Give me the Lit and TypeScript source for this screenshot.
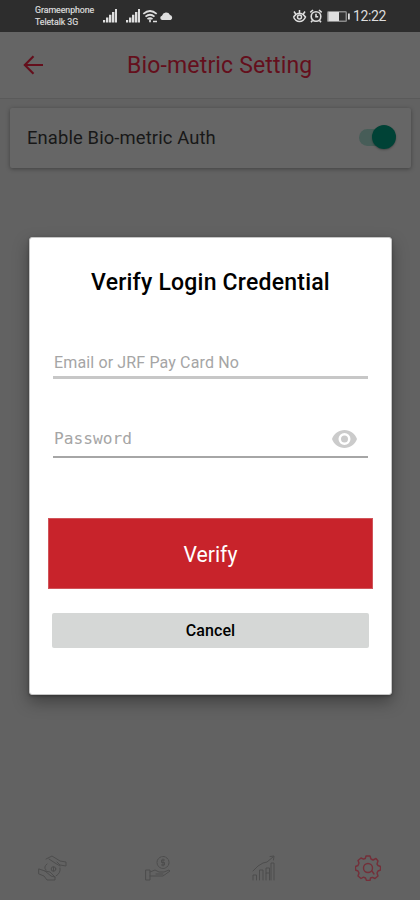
import { LitElement, html, css, svg } from "lit";
import { customElement } from "lit/decorators.js";

const signal = svg`<path d="M0 14.5h2.2v-2.500H0zM3 14.500h2.400V9.500H3zM6 14.500h2.400V6.800H6zM9 14.500h2.400V4H9zM12 14.500h2V1h-2z"/>`;

@customElement("app-root")
export class AppRoot extends LitElement {
  static styles = css`
    :host { display: block; }
    * { box-sizing: border-box; }
    .screen {
      position: relative; width: 420px; height: 900px; overflow: hidden;
      display: flex; flex-direction: column;
      background: #626262; font-family: Roboto, sans-serif; color: #181818;
    }
    svg { display: block; flex: none; }
    .status {
      height: 32px; background: #2d2d2d; color: #dcdcdc; fill: #dedede;
      display: flex; align-items: center; padding: 0 33px 0 35px;
    }
    .carrier { width: 68px; font-size: 8.8px; line-height: 12.5px; white-space: nowrap; letter-spacing: -0.05px; -webkit-text-stroke: 0.2px currentColor; }
    .spacer { flex: 1; }
    .clock { font-size: 14px; line-height: 32px; width: 34px; margin-left: 3px; letter-spacing: -0.35px; white-space: nowrap; }
    .bar {
      height: 67px; background: #656565; border-bottom: 1px solid #5a5a5a;
      display: flex; align-items: center; padding-left: 23px; color: #640f1c;
    }
    .title { flex: 1; padding-left: 83px; font-size: 23px; line-height: 30px; white-space: nowrap; padding-top: 1px; letter-spacing: 0.16px; }
    .card {
      margin: 9px 9px 0 10px; height: 60px; background: #666; border-radius: 2px;
      box-shadow: 0 1px 4px rgba(0, 0, 0, 0.35);
      display: flex; align-items: center; justify-content: space-between; padding: 0 15px 2px 17px;
      font-size: 18.4px; letter-spacing: 0.12px; white-space: nowrap;
    }
    .toggle { width: 37px; height: 24px; display: flex; align-items: center; }
    .track { width: 30px; height: 17px; border-radius: 9px; background: #475d58; }
    .thumb { width: 24px; height: 24px; border-radius: 50%; background: #004236; margin-left: -17px; flex: none; box-shadow: 0 1px 2px rgba(0, 0, 0, 0.3); }
    .nav { height: 64px; margin-top: auto; display: grid; grid-template-columns: repeat(4, 1fr); justify-items: center; align-items: center; color: #4d4d4d; }
    .nav svg { fill: none; stroke: currentColor; stroke-width: 1; stroke-linejoin: round; stroke-linecap: round; }
    .nav .pay { margin-left: 3px; }
    .nav .stats { margin-left: 2px; }
    .nav .active { color: #742f39; stroke-width: 1.4; }
    .dialog {
      position: absolute; left: 29px; top: 237px; width: 363px; height: 458px;
      background: #fff; border: 1px solid #c6c6c6; border-radius: 3px; color: #000;
      box-shadow: 0 7px 16px rgba(0, 0, 0, 0.34), 0 1px 3px rgba(0, 0, 0, 0.3);
      display: flex; flex-direction: column; padding: 29px 18px 0;
    }
    .heading { text-align: center; font-size: 23px; font-weight: 500; line-height: 32px; letter-spacing: 0.22px; white-space: nowrap; }
    .field { margin: 0 5px; display: flex; align-items: center; justify-content: space-between; color: #a5a5a5; font-size: 16px; white-space: nowrap; padding: 0 11px 0 1px; }
    .email { margin-top: 49px; height: 31px; border-bottom: 3px solid #c7c7c7; letter-spacing: 0.14px; padding-top: 1px; }
    .password { margin-top: 42px; height: 37px; border-bottom: 2px solid #a6a6a6; font-family: "DejaVu Sans Mono", monospace; font-size: 16.2px; }
    button { font-family: inherit; border: 0; padding: 0; display: block; }
    .verify { margin-top: 60px; height: 71px; background: #c8232b; color: #fff; font-size: 21.2px; border: 1px solid #d0545a; padding-top: 1px; }
    .cancel { margin: 24px 4px 0; height: 35px; background: #d5d7d6; color: #000; font-size: 16px; font-weight: 500; border-radius: 2px; letter-spacing: 0.1px; }
  `;

  render() {
    return html`
      <div class="screen">
        <div class="status">
          <div class="carrier"><div>Grameenphone</div><div>Teletalk 3G</div></div>
          <svg width="23" height="16" viewBox="0 0 23 16">${signal}</svg>
          <svg width="16" height="16" viewBox="0 0 16 16">${signal}</svg>
          <svg width="17" height="16" viewBox="0 0 17 16" fill="none" stroke="#dedede" stroke-width="1.7">
            <path d="M1.3 5.800Q8 .2 14.700 5.800M3.500 8.700Q8 4.800 12.500 8.700M5.500 11.200Q8 9 10.500 11.200"/>
            <path d="M8 11.200v3M11 13.500h4" />
          </svg>
          <svg width="15" height="16" viewBox="0 0 15 16"><path d="M3 12a2.200 2.200 0 0 1 0-4.300A4.300 4.300 0 0 1 11 6.900 2.700 2.700 0 0 1 11.600 12z"/></svg>
          <div class="spacer"></div>
          <svg width="17" height="16" viewBox="0 0 17 16" fill="none" stroke="#dedede" stroke-width="1.5">
            <path d="M1.500 9Q7.500 1.500 13.500 9 11.500 13.500 7.500 13.500T1.500 9M7.500 5V2M3.700 6 2 3.500M11.300 6 13 3.500"/><circle cx="7.500" cy="9" r="2" />
          </svg>
          <svg width="18" height="16" viewBox="0 0 18 16" fill="none" stroke="#dedede" stroke-width="1.6">
            <circle cx="7" cy="8.500" r="4.800"/><path d="M7 5.800v3h2.200M1.300 4.300 4 2M10 2l2.700 2.300M3.500 12.500 2 14.300M10.500 12.500l1.500 1.800"/>
          </svg>
          <svg width="23" height="16" viewBox="0 0 23 16">
            <rect x="0" y="3" width="20" height="11" rx="1.500" fill="#8a8a8a"/><rect x="12" y="4.500" width="6.500" height="8" fill="#333"/><path d="M1.500 4h10.500v9H1.500zM21 5.500h1.800v6H21z"/>
          </svg>
          <div class="clock">12:22</div>
        </div>
        <div class="bar">
          <svg width="21" height="20" viewBox="0 0 21 20" fill="none" stroke="currentColor" stroke-width="2.1"><path d="M20 10H2M10.500 1.300 1.800 10l8.700 8.700"/></svg>
          <div class="title">Bio-metric Setting</div>
        </div>
        <div class="card">
          <span>Enable Bio-metric Auth</span>
          <div class="toggle"><div class="track"></div><div class="thumb"></div></div>
        </div>
        <div class="nav">
          <svg width="30" height="26" viewBox="0 0 30 26">
            <path d="M8 4 14 1l8 5 6 1v4l-6-1-3-3M11 4l6 4 5 3M1 14l6 2 6 5 4 1v3H9l-3-4-5-2zM7 16l5 1 5 5M9 9Q5 12 8 15M22 13Q23 18 18 21"/>
            <circle cx="15.500" cy="14" r="2.300"/><path d="M15.500 12v4"/>
          </svg>
          <svg class="pay" width="28" height="26" viewBox="0 0 28 26">
            <path d="M1 15h4v10H1zM5 17l5-2 4 2h5l5-2 1 1-7 5H5M11 19h7"/>
            <circle cx="18" cy="7.500" r="6" stroke-dasharray="2.8 1"/><path d="M19.500 5h-3v2.500h3V10h-3M18 4v7"/>
          </svg>
          <svg class="stats" width="24" height="27" viewBox="0 0 24 27">
            <path d="M1 25v-5h3.500v5M7.500 25V15H11v10M14 25v-7h3.500v7M14 18v-5h3.500v5M19 25V8h3v17M1 16l5-5 5-3 4-1 6-5M18 1.500l4-.5-.5 4"/>
          </svg>
          <svg class="active" width="26" height="26" viewBox="0 0 26 26">
            <path d="M11 1h4l1 3 2 1 3-1.500L23 6l-1 3 1 1.500 2.500 1v3.500L23 16l-1 2 1 3-3 2.500-2.500-1.200L15.500 23 15 25.500h-3.500L10.500 23l-2-.8L6 23.500 3 21l1-3-1-2-2.500-1v-3.500L3 10.500 4 8 3 5.500 6 3l2.500 1.200 1.800-.7z"/><circle cx="13" cy="13" r="4.500"/><path d="m17 16 2 3"/>
          </svg>
        </div>
        <div class="dialog">
          <div class="heading">Verify Login Credential</div>
          <div class="field email">Email or JRF Pay Card No</div>
          <div class="field password">
            <span>Password</span>
            <svg width="25" height="18" viewBox="0 0 25 18">
              <path fill="#cbcbcb" fill-rule="evenodd" d="M12.500 0C6.800 0 2 3.700 0 9c2 5.300 6.800 9 12.500 9S23 14.300 25 9C23 3.700 18.200 0 12.500 0zM12.500 15a6 6 0 1 1 0-12 6 6 0 0 1 0 12zM12.500 5.500a3.500 3.500 0 1 0 0 7 3.500 3.500 0 0 0 0-7z"/>
            </svg>
          </div>
          <button class="verify">Verify</button>
          <button class="cancel">Cancel</button>
        </div>
      </div>
    `;
  }
}
